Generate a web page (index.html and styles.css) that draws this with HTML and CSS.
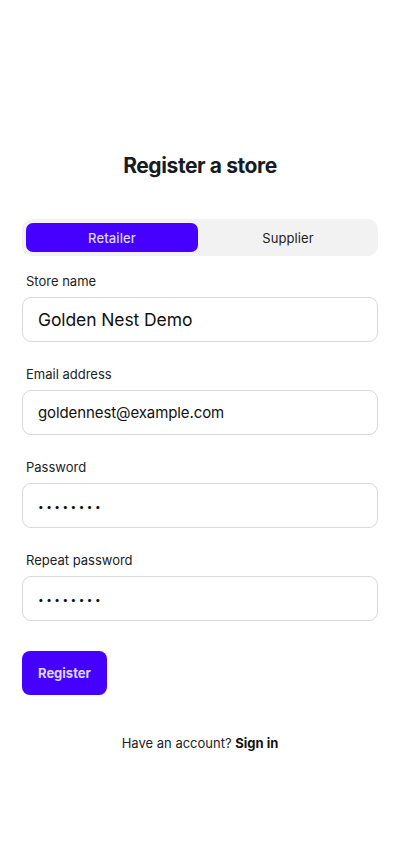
FILE: index.html
```html
<!doctype html>
<html lang="en">
<head>
  <meta charset="utf-8" />
  <meta name="viewport" content="width=device-width,initial-scale=1" />
  <title>Register a store</title>
  <link rel="stylesheet" href="styles.css">
</head>
<body>
  <main class="page">
    <h1 class="title">Register a store</h1>

    <div class="tabs" role="tablist">
      <button type="button" class="tab active" role="tab" aria-selected="true">Retailer</button>
      <button type="button" class="tab" role="tab" aria-selected="false">Supplier</button>
    </div>

    <form class="form" novalidate>
      <div class="field">
        <label for="store">Store name</label>
        <input id="store" class="input big" type="text" value="Golden Nest Demo" />
      </div>

      <div class="field">
        <label for="email">Email address</label>
        <input id="email" class="input" type="email" value="goldennest@example.com" />
      </div>

      <div class="field">
        <label for="password">Password</label>
        <input id="password" class="input" type="password" value="secret12" />
      </div>

      <div class="field">
        <label for="repeat">Repeat password</label>
        <input id="repeat" class="input" type="password" value="secret12" />
      </div>

      <button type="submit" class="btn">Register</button>
    </form>

    <p class="foot">Have an account? <a href="#">Sign in</a></p>
  </main>
</body>
</html>
```

FILE: styles.css
```css
:root{
  --primary:#4600ff;
  --primary-text:#ddd8ff;
  --text:#1b1f27;
  --border:#d9d9d9;
  --tabs-bg:#f2f2f2;
}
html,body{margin:0;background:#fff;font-family:Inter,"Noto Sans",sans-serif;color:var(--text);}
.page{padding:152px 22px 40px}
.title{margin:0 0 39px;text-align:center;font-size:21px;line-height:28px;font-weight:700;color:#161b24;letter-spacing:-0.4px}

.tabs{display:grid;grid-template-columns:1fr 1fr;gap:4px;padding:4px;background:var(--tabs-bg);border-radius:10px}
.tab{height:29px;border:0;border-radius:7px;background:transparent;font:inherit;font-size:13px;letter-spacing:0.1px;color:#222;cursor:pointer}
.tab.active{background:var(--primary);color:var(--primary-text);font-weight:500}

.form{margin-top:17px}
.field{margin-bottom:24px}
.field label{display:block;padding-left:4px;margin-bottom:7px;font-size:13px;line-height:17px;color:#222}
.input{display:block;width:100%;box-sizing:border-box;height:45px;padding:0 15px;border:1px solid var(--border);border-radius:9px;font-family:inherit;font-size:15px;letter-spacing:-0.1px;color:#111;background:#fff;outline:none}
.input.big{font-size:17.5px;letter-spacing:-0.1px}
.input[type="password"]{font-size:10px;letter-spacing:2.5px}

.btn{margin-top:6px;height:44px;padding:0 16px;border:0;border-radius:8px;background:var(--primary);color:var(--primary-text);font-family:inherit;font-size:13px;font-weight:700;cursor:pointer}

.foot{margin:40px 0 0;text-align:center;font-size:13px;line-height:17px;color:#222}
.foot a{color:#111;font-weight:700;text-decoration:none}
```
